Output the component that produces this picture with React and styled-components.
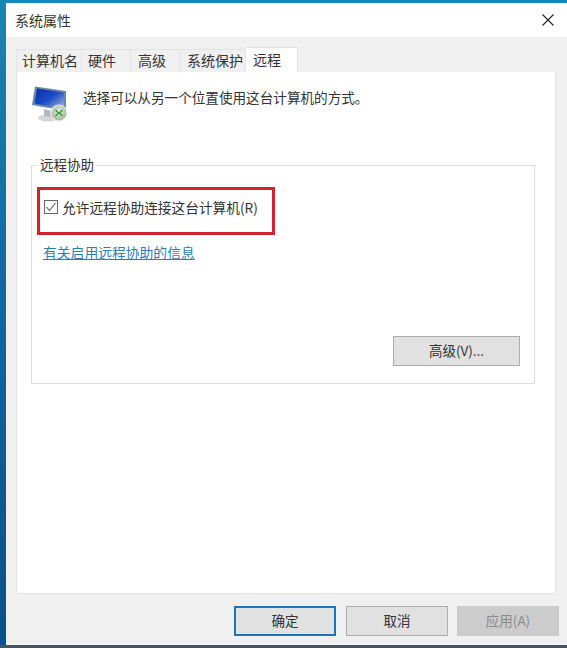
import React from "react";
import styled, { createGlobalStyle } from "styled-components";

const GlobalStyle = createGlobalStyle`
  html, body {
    margin: 0;
    padding: 0;
    height: 100%;
    overflow: hidden;
    background: #0a5f9c;
  }
  #root {
    height: 648px;
  }
`;

const Desktop = styled.div`
  width: 567px;
  height: 648px;
  box-sizing: border-box;
  padding: 3px 0 0 6px;
  background: linear-gradient(180deg, #1786b4 0%, #0f6aa6 40%, #0a4f8f 100%);
  border-bottom: 3px solid #48535c;
  display: flex;
  font-family: "Noto Sans CJK SC", "Liberation Sans", sans-serif;
  color: #2b2b2b;
`;

const Window = styled.div`
  flex: 1;
  display: flex;
  flex-direction: column;
  background: #f0f0f0;
`;

const TitleBar = styled.div`
  height: 34px;
  flex: none;
  background: #fff;
  display: flex;
  align-items: center;
  justify-content: space-between;
  padding: 0 13px 0 9px;
  font-size: 14px;
  color: #333;
`;

const Body = styled.div`
  flex: 1;
  display: flex;
  flex-direction: column;
  padding: 10px 11px 0 10px;
`;

const TabRow = styled.div`
  display: flex;
  height: 25px;
  flex: none;
  align-items: flex-end;
`;

const Tab = styled.div`
  width: ${(p) => p.$width}px;
  height: ${(p) => (p.$active ? 25 : 23)}px;
  box-sizing: border-box;
  padding-left: ${(p) => p.$pad}px;
  background: ${(p) => (p.$active ? "#fff" : "#f0f0f0")};
  border-top: 1px solid #e3e3e3;
  border-right: 1px solid #e3e3e3;
  border-left: ${(p) => (p.$first ? "1px solid #e3e3e3" : "none")};
  font-size: 14px;
  line-height: ${(p) => (p.$active ? 22 : 21)}px;
  color: #333;
  white-space: nowrap;
`;

const Panel = styled.div`
  height: 522px;
  flex: none;
  box-sizing: border-box;
  background: #fff;
  border: 1px solid #e2e2e2;
  border-top: none;
  padding: 0 20px 0 14px;
  display: flex;
  flex-direction: column;
`;

const Intro = styled.div`
  height: 93px;
  flex: none;
  display: flex;
  align-items: flex-start;
  padding-top: 13px;
  box-sizing: border-box;
  font-size: 13.6px;
  color: #333;
`;

const IntroText = styled.span`
  line-height: 24px;
  margin-left: 14px;
`;

const Group = styled.div`
  position: relative;
  height: 219px;
  box-sizing: border-box;
  border: 1px solid #dedede;
  padding: 21px 14px 0 5px;
  display: flex;
  flex-direction: column;
`;

const GroupLabel = styled.span`
  position: absolute;
  top: -11px;
  left: 6px;
  padding: 0 2px;
  background: #fff;
  font-size: 13.5px;
  line-height: 18px;
  color: #333;
`;

const Highlight = styled.div`
  width: 238px;
  height: 48px;
  box-sizing: border-box;
  border: 3px solid #d4202f;
  display: flex;
  align-items: center;
  padding: 0 0 8px 4px;
  gap: 4px;
  font-size: 13.7px;
  color: #333;
`;

const CheckBox = styled.span`
  width: 14px;
  height: 14px;
  flex: none;
  box-sizing: border-box;
  border: 1px solid #666;
  display: flex;
  align-items: center;
  justify-content: center;
  background: #fff;
`;

const InfoLink = styled.a`
  margin: 6px 0 0 6px;
  font-size: 13.8px;
  line-height: 22px;
  color: #2a7fb8;
  text-decoration: underline;
`;

const GroupFooter = styled.div`
  margin-top: auto;
  display: flex;
  justify-content: flex-end;
  padding-bottom: 17px;
`;

const Button = styled.button`
  width: ${(p) => p.$width || 102}px;
  height: 30px;
  box-sizing: border-box;
  padding: 0 0 2px;
  margin: 0;
  background: ${(p) => (p.$disabled ? "#cccccc" : "#e1e1e1")};
  border: ${(p) => (p.$primary ? "2px solid #1e73b4" : "1px solid #adadad")};
  border-color: ${(p) => (p.$disabled ? "#cccccc" : undefined)};
  color: ${(p) => (p.$disabled ? "#8a8a8a" : "#333")};
  font-family: inherit;
  font-size: 13.5px;
`;

const ButtonRow = styled.div`
  display: flex;
  justify-content: flex-end;
  gap: 10px;
  padding-top: 12px;
  margin-right: -3px;

  & > :last-child {
    margin-left: -1px;
  }
`;

const MonitorIcon = () => (
  <svg width="38" height="38" viewBox="0 0 38 38">
    <defs>
      <linearGradient id="scr" x1="0" y1="0" x2="1" y2="1">
        <stop offset="0" stopColor="#0a2aa8" />
        <stop offset="0.5" stopColor="#1a4cc8" />
        <stop offset="1" stopColor="#a9bfd6" />
      </linearGradient>
      <radialGradient id="globe" cx="0.5" cy="0.4" r="0.7">
        <stop offset="0" stopColor="#e4eee0" />
        <stop offset="1" stopColor="#8fa98c" />
      </radialGradient>
    </defs>
    <ellipse cx="17" cy="33" rx="10" ry="3.500" fill="#d3d5d8" />
    <path d="M13 24l8 2v6l-8-1z" fill="#b3b8bd" />
    <path d="M4 1.500L35 6v20L1 20z" fill="#6d87a8" />
    <path d="M6 3.500L33 7.500v16.500L3.500 18.500z" fill="url(#scr)" />
    <circle cx="28" cy="28" r="8" fill="url(#globe)" stroke="#eef1ec" strokeWidth="1.200" />
    <path d="M24.500 25l3 3-3 3M31.500 25l-3 3 3 3" fill="none" stroke="#3c9a38" strokeWidth="1.500" />
  </svg>
);

const App = () => {
  return (
    <>
      <GlobalStyle />
      <Desktop>
        <Window>
          <TitleBar>
            系统属性
            <svg width="12" height="12" viewBox="0 0 12 12">
              <path d="M.5.5l11 11M11.500.5l-11 11" stroke="#222" strokeWidth="1.100" />
            </svg>
          </TitleBar>
          <Body>
            <TabRow>
              <Tab $first $width={66} $pad={5}>计算机名</Tab>
              <Tab $width={49} $pad={6}>硬件</Tab>
              <Tab $width={50} $pad={7}>高级</Tab>
              <Tab $width={65} $pad={6}>系统保护</Tab>
              <Tab $active $width={52} $pad={7}>远程</Tab>
            </TabRow>
            <Panel>
              <Intro>
                <MonitorIcon />
                <IntroText>选择可以从另一个位置使用这台计算机的方式。</IntroText>
              </Intro>
              <Group>
                <GroupLabel>远程协助</GroupLabel>
                <Highlight>
                  <CheckBox>
                    <svg width="10" height="10" viewBox="0 0 10 10">
                      <path d="M.5 5l3 3.500L9.500 1" fill="none" stroke="#555" strokeWidth="1.100" />
                    </svg>
                  </CheckBox>
                  允许远程协助连接这台计算机(R)
                </Highlight>
                <InfoLink>有关启用远程协助的信息</InfoLink>
                <GroupFooter>
                  <Button $width={127}>高级(V)...</Button>
                </GroupFooter>
              </Group>
            </Panel>
            <ButtonRow>
              <Button $primary>确定</Button>
              <Button>取消</Button>
              <Button $disabled>应用(A)</Button>
            </ButtonRow>
          </Body>
        </Window>
      </Desktop>
    </>
  );
};

export default App;
